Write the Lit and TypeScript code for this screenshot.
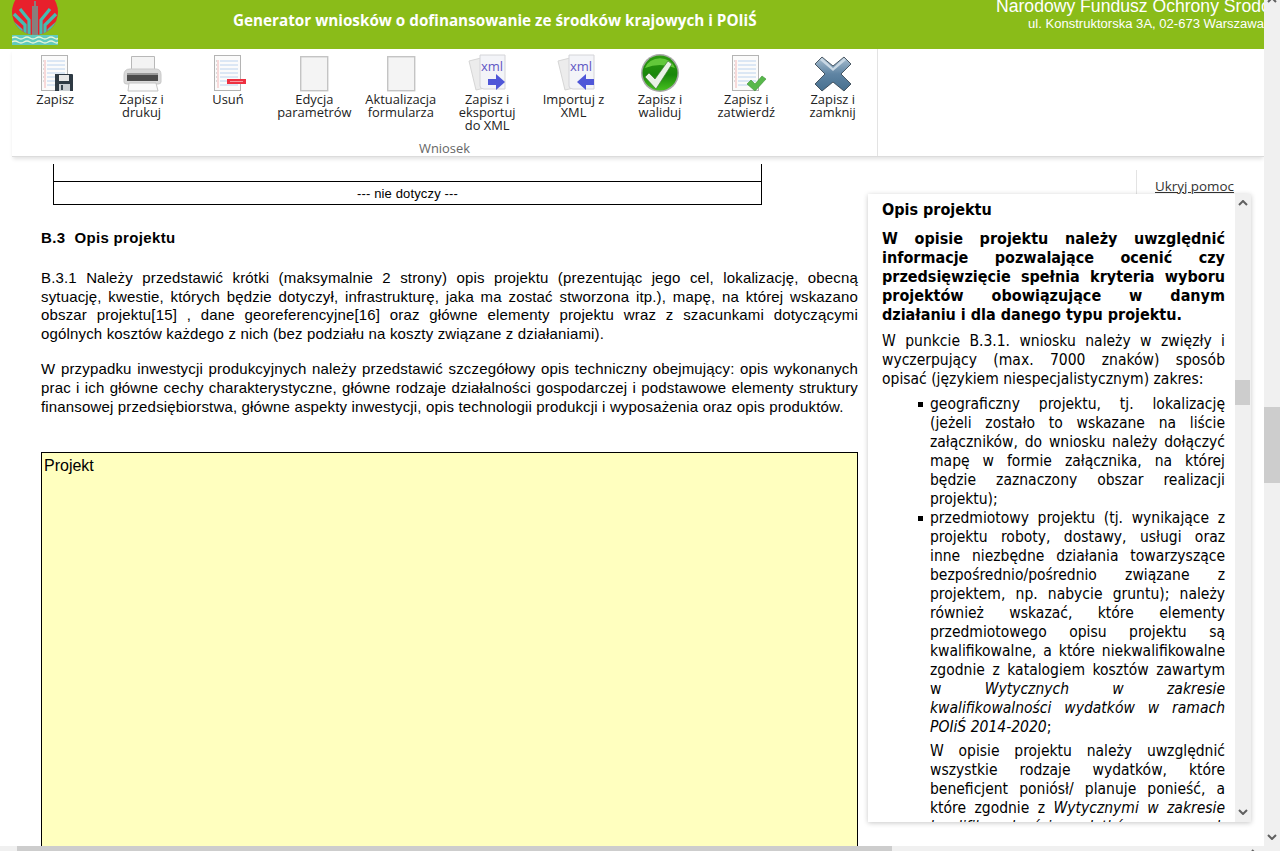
import { LitElement, html, css, svg } from 'lit';
import { customElement } from 'lit/decorators.js';

const pageLines = svg`
  <rect x="14.5" y="2.5" width="26" height="35" fill="#fbfbfb" stroke="#b4b4b4"/>
  <path d="M18 7v28" stroke="#f3b8b8" stroke-width="1"/>
  <path d="M20 8h18M20 12h18M20 16h18M20 20h18M20 24h18M20 28h18M20 32h18" stroke="#bcd3ee" stroke-width="1"/>
  <path d="M16 8h1M16 12h1M16 16h1M16 20h1M16 24h1M16 28h1" stroke="#bbb"/>`;

const xmlPage = svg`
  <path d="M10 8l12-3 8 29-13 3z" fill="#ececec" stroke="#d6d6d6"/>
  <path d="M21 2h25v34H25q-4 0-4-3z" fill="#f3f4f8" stroke="#d4d4d8"/>
  <text x="33" y="18" text-anchor="middle" class="xml">xml</text>`;

const icons = {
  save: svg`${pageLines}
    <path d="M28 21h17a1 1 0 0 1 1 1v16H28z" fill="#2e3a44"/>
    <rect x="32" y="22" width="10" height="6" fill="#e8e8e8"/>
    <rect x="32" y="31" width="11" height="7" fill="#c9ced2"/>
    <rect x="34" y="32" width="2" height="5" fill="#3a4650"/>`,
  print: svg`
    <path d="M17.500 18V3.500h23V18z" fill="#f3f3f3" stroke="#b8b8b8"/>
    <path d="M10 22q0-6 6-6h26q5 0 5 6v7q0 2-3 2H13q-3 0-3-2z" fill="#dadada" stroke="#c8c8c8"/>
    <rect x="13" y="22" width="31" height="6" fill="#4c4c4c"/>
    <rect x="13" y="20" width="31" height="2" fill="#9a9a9a"/>
    <path d="M15 30h27l2 8H14z" fill="#fafafa" stroke="#c4c4c4"/>`,
  remove: svg`${pageLines}
    <rect x="27" y="26" width="19" height="5" fill="#ee3040"/>
    <rect x="30" y="28" width="13" height="1" fill="#f79aa2"/>`,
  blank: svg`
    <rect x="14.700" y="3.700" width="27" height="34" fill="#f4f4f4" stroke="#c4c4c4" stroke-width="1.4"/>`,
  xmlOut: svg`${xmlPage}
    <path d="M29 26h8v-5l9 8-9 8v-5h-8z" fill="#4f57d8"/>`,
  xmlIn: svg`<g transform="translate(2 0)">${xmlPage}
    <path d="M46 26h-8v-5l-9 8 9 8v-5h8z" fill="#4f57d8"/></g>`,
  valid: svg`
    <defs>
      <linearGradient id="glass" x1="0" y1="0" x2="0" y2="1">
        <stop offset="0" stop-color="#2e9a12"/>
        <stop offset=".55" stop-color="#19870a"/>
        <stop offset="1" stop-color="#46c01e"/>
      </linearGradient>
    </defs>
    <circle cx="28" cy="20" r="19" fill="#a8a8a8"/>
    <circle cx="28" cy="20" r="17.500" fill="url(#glass)"/>
    <path d="M13 15a15.500 13 0 0 1 30 0q-15-6-30 0z" fill="#62c83a"/>
    <path d="M13 24l4-4 6 6 13-18 4 3-16 25z" fill="#eaf2e6" stroke="#3c7a30" stroke-width=".7"/>`,
  approve: svg`${pageLines}
    <path d="M29 31l4-4 4 4 7-8 4 3-11 12z" fill="#58b84a" stroke="#3d8f35" stroke-width=".6"/>`,
  close: svg`
    <defs>
      <linearGradient id="steel" x1="0" y1="0" x2="0" y2="1">
        <stop offset="0" stop-color="#a9bfd0"/>
        <stop offset=".5" stop-color="#5f84a3"/>
        <stop offset="1" stop-color="#47708f"/>
      </linearGradient>
    </defs>
    <path d="M17 4l11 9 11-9 7 7-10 10 10 10-7 7-11-9-11 9-7-7 10-10-10-10z" fill="url(#steel)" stroke="#2c3a46" stroke-width=".8"/>
    <path d="M17 5l11 10 11-10 2 2-13 11-13-11z" fill="#c9d8e4"/>`,
};

const tools = [
  { icon: icons.save, label: 'Zapisz' },
  { icon: icons.print, label: 'Zapisz i\ndrukuj' },
  { icon: icons.remove, label: 'Usuń' },
  { icon: icons.blank, label: 'Edycja\nparametrów' },
  { icon: icons.blank, label: 'Aktualizacja\nformularza' },
  { icon: icons.xmlOut, label: 'Zapisz i\neksportuj\ndo XML' },
  { icon: icons.xmlIn, label: 'Importuj z\nXML' },
  { icon: icons.valid, label: 'Zapisz i\nwaliduj' },
  { icon: icons.approve, label: 'Zapisz i\nzatwierdź' },
  { icon: icons.close, label: 'Zapisz i\nzamknij' },
];

@customElement('app-root')
export class AppRoot extends LitElement {
  static styles = css`
    :host {
      display: grid;
      grid-template-columns: 1fr 16px;
      grid-template-rows: 1fr 5px;
      width: 1280px;
      height: 851px;
      overflow: hidden;
      background: #fff;
      font-family: 'Liberation Sans', Arial, sans-serif;
      color: #000;
    }

    .page {
      min-width: 0;
      min-height: 0;
      display: flex;
      flex-direction: column;
      overflow: hidden;
    }

    .banner {
      flex: none;
      height: 49px;
      background: #8abc19;
      color: #fff;
      display: flex;
      overflow: hidden;
    }
    .logo {
      flex: none;
      width: 46px;
      height: 46px;
      margin-left: 12px;
    }
    .title {
      flex: none;
      width: 938px;
      padding: 11px 0 0 175px;
      box-sizing: border-box;
      font: 700 15.25px/18px 'Open Sans', sans-serif;
      white-space: nowrap;
    }
    .org {
      flex: none;
      width: 268px;
      white-space: nowrap;
      overflow: hidden;
      font-size: 17.6px;
      line-height: 18px;
      margin-top: -3px;
    }
    .org div + div {
      font-size: 13.05px;
      line-height: 17px;
      text-align: right;
    }

    .ribbon {
      flex: none;
      height: 108px;
      margin-left: 12px;
      box-sizing: border-box;
      border-bottom: 1px solid #dcdcdc;
      box-shadow: 0 3px 4px -1px rgba(0, 0, 0, 0.12);
      display: flex;
      position: relative;
    }
    .group {
      width: 865px;
      border-right: 1px solid #e3e3e3;
      display: flex;
      flex-direction: column;
    }
    .tools {
      flex: 1;
      display: flex;
      padding-top: 4px;
    }
    .tool {
      width: 86.4px;
      display: flex;
      flex-direction: column;
      align-items: center;
      font: 12.9px/13px 'Open Sans', sans-serif;
      color: #222;
      text-align: center;
    }
    .tool svg {
      width: 56px;
      height: 39px;
      flex: none;
      margin-bottom: 1px;
    }
    .tool span {
      white-space: pre-line;
    }
    .xml {
      font: 400 13px 'Open Sans', sans-serif;
      fill: #5f58c4;
    }
    .group-name {
      text-align: center;
      font: 12.9px/16px 'Open Sans', sans-serif;
      color: #666;
    }

    .content {
      flex: 1;
      min-height: 0;
      display: flex;
      overflow: hidden;
    }

    .doc {
      flex: none;
      width: 817px;
      margin-left: 41px;
      padding-top: 7px;
      font-size: 15px;
      letter-spacing: 0.16px;
      line-height: 18.6px;
    }
    .stub {
      width: 709px;
      margin-left: 12px;
      box-sizing: border-box;
      border: 1px solid #000;
      border-top: 0;
    }
    .stub div:first-child {
      height: 17px;
      border-bottom: 1px solid #000;
    }
    .stub div:last-child {
      height: 22px;
      font-size: 13px;
      letter-spacing: 0.14px;
      line-height: 24px;
      text-align: center;
    }
    h2 {
      margin: 24px 0 0;
      font-size: 15px;
      letter-spacing: 0.34px;
      line-height: 18px;
      font-weight: 700;
      white-space: pre;
    }
    .doc p {
      margin: 0;
      text-align: justify;
    }
    .doc h2 + p {
      margin-top: 22px;
    }
    .doc p + p {
      margin-top: 17px;
    }
    .answer {
      margin-top: 35.5px;
      height: 500px;
      box-sizing: border-box;
      border: 1px solid #000;
      background: #ffffbf;
      padding: 3px 2px;
      font-size: 16px;
      letter-spacing: 0;
      line-height: 20px;
    }

    .side {
      flex: none;
      width: 383px;
      margin-left: 10px;
      display: flex;
      flex-direction: column;
      min-height: 0;
    }
    .hide-bar {
      flex: none;
      height: 37px;
      display: flex;
      box-sizing: border-box;
      padding-top: 13px;
    }
    .hide-bar span {
      margin-left: 268px;
      border-left: 1px solid #e3e3e3;
    }
    .hide-bar a {
      margin: 4px 0 0 18px;
      font: 13.4px/24px 'Open Sans', sans-serif;
      color: #333;
      text-decoration: underline;
      white-space: nowrap;
    }
    .help {
      flex: none;
      height: 628px;
      display: flex;
      box-shadow: 0 1px 5px rgba(0, 0, 0, 0.22);
      background: #fff;
      overflow: hidden;
      position: relative;
    }
    .help-text {
      width: 367px;
      height: 628px;
      box-sizing: border-box;
      padding: 6px 10px 0 14px;
      overflow: hidden;
      font: 15.5px/19px 'DejaVu Sans', sans-serif;
      font-stretch: condensed;
      text-align: justify;
    }
    .help-text h3 {
      margin: 0 0 10px;
      font-size: 16px;
      line-height: 19px;
      font-weight: 700;
    }
    .help-text b {
      display: block;
      margin-bottom: 1px;
      font-size: 16px;
    }
    .help-text p {
      margin: 0 0 8px;
    }
    .help-text ul {
      margin: -2px 0 0;
      padding: 0 0 0 48px;
      list-style: none;
    }
    .help-text li {
      position: relative;
    }
    .help-text li::before {
      content: '';
      position: absolute;
      left: -12px;
      top: 7px;
      width: 5px;
      height: 5px;
      background: #000;
    }
    .help-text ul p {
      margin: 5px 0 0;
    }

    .vbar {
      background: #f0f0f0;
      position: relative;
    }
    .vbar svg {
      position: absolute;
      left: 50%;
      margin-left: -5px;
      width: 10px;
      height: 6px;
    }
    .vbar svg.up {
      top: 6px;
    }
    .vbar svg.down {
      bottom: 7px;
    }
    .thumb {
      position: absolute;
      left: 0;
      background: #cdcdcd;
    }
    .inner-bar {
      width: 16px;
      flex: none;
    }
    .inner-bar .thumb {
      top: 186px;
      height: 25px;
      width: 15px;
    }
    .page-bar {
      grid-row: 1 / 3;
      grid-column: 2;
    }
    .page-bar .thumb {
      top: 407px;
      height: 76px;
      width: 16px;
    }
    .page-bar svg.up {
      top: -3px;
    }
    .page-bar svg.down {
      bottom: 11px;
    }
    .hbar {
      grid-row: 2;
      grid-column: 1;
      background: #f0f0f0;
      position: relative;
      overflow: hidden;
    }
    .hbar div {
      position: absolute;
      left: 17px;
      top: 0;
      bottom: 0;
      width: 875px;
      background: #cdcdcd;
    }
    .hbar svg {
      position: absolute;
      right: 7px;
      top: 3px;
      width: 6px;
      height: 10px;
    }
  `;

  private chevron(cls: string) {
    const d = cls === 'up' ? 'M1 5l4-4 4 4' : 'M1 1l4 4 4-4';
    return html`<svg class=${cls} viewBox="0 0 10 6"><path d=${d} fill="none" stroke="#606060" stroke-width="2"/></svg>`;
  }

  private logo() {
    return html`<svg class="logo" viewBox="0 0 46 46">
      <defs><clipPath id="disc"><circle cx="23" cy="12" r="23"/></clipPath></defs>
      <circle cx="23" cy="12" r="23" fill="#e8202c"/>
      <g clip-path="url(#disc)" fill="none" stroke="#45bdb2" stroke-width="3.2">
        <path d="M17 35V20L8 9"/>
        <path d="M29 35V20L38 9"/>
        <path d="M13 35V25L2 14"/>
        <path d="M33 35V25L44 14"/>
        <path d="M9 35V30L0 22"/>
        <path d="M37 35V30L46 22"/>
      </g>
      <path d="M21 35V6M23 35V1M25 35V6" fill="none" stroke="#5fa8a0" stroke-width="1.400"/>
      <rect x="0" y="35" width="46" height="10" fill="#62cabd"/>
      <path d="M0 38q3-2 6 0t6 0 6 0 6 0 6 0 6 0 6 0 4 0M0 42q3-2 6 0t6 0 6 0 6 0 6 0 6 0 6 0 4 0" fill="none" stroke="#e6f5d8" stroke-width="1.500"/>
    </svg>`;
  }

  render() {
    return html`
      <div class="page">
        <header class="banner">
          ${this.logo()}
          <div class="title">Generator wniosków o dofinansowanie ze środków krajowych i POIiŚ</div>
          <div class="org">
            <div>Narodowy Fundusz Ochrony Środowiska i Gospodarki Wodnej</div>
            <div>ul. Konstruktorska 3A, 02-673 Warszawa</div>
          </div>
        </header>

        <nav class="ribbon">
          <div class="group">
            <div class="tools">
              ${tools.map(
                (t) => html`<div class="tool">
                  <svg viewBox="0 0 56 39">${t.icon}</svg>
                  <span>${t.label}</span>
                </div>`,
              )}
            </div>
            <div class="group-name">Wniosek</div>
          </div>
        </nav>

        <div class="content">
          <main class="doc">
            <div class="stub">
              <div></div>
              <div>--- nie dotyczy ---</div>
            </div>
            <h2>B.3  Opis projektu</h2>
            <p>
              B.3.1 Należy przedstawić krótki (maksymalnie 2 strony) opis projektu (prezentując jego cel, lokalizację,
              obecną sytuację, kwestie, których będzie dotyczył, infrastrukturę, jaka ma zostać stworzona itp.), mapę, na
              której wskazano obszar projektu[15] , dane georeferencyjne[16] oraz główne elementy projektu wraz z
              szacunkami dotyczącymi ogólnych kosztów każdego z nich (bez podziału na koszty związane z działaniami).
            </p>
            <p>
              W przypadku inwestycji produkcyjnych należy przedstawić szczegółowy opis techniczny obejmujący: opis
              wykonanych prac i ich główne cechy charakterystyczne, główne rodzaje działalności gospodarczej i podstawowe
              elementy struktury finansowej przedsiębiorstwa, główne aspekty inwestycji, opis technologii produkcji i
              wyposażenia oraz opis produktów.
            </p>
            <div class="answer">Projekt</div>
          </main>

          <aside class="side">
            <div class="hide-bar"><span></span><a>Ukryj pomoc</a></div>
            <div class="help">
              <div class="help-text">
                <h3>Opis projektu</h3>
                <p>
                  <b>W opisie projektu należy uwzględnić informacje pozwalające ocenić czy przedsięwzięcie spełnia
                  kryteria wyboru projektów obowiązujące w danym działaniu i dla danego typu projektu.</b>
                </p>
                <p>
                  W punkcie B.3.1. wniosku należy w zwięzły i wyczerpujący (max. 7000 znaków) sposób opisać (językiem
                  niespecjalistycznym) zakres:
                </p>
                <ul>
                  <li>
                    geograficzny projektu, tj. lokalizację (jeżeli zostało to wskazane na liście załączników, do wniosku
                    należy dołączyć mapę w formie załącznika, na której będzie zaznaczony obszar realizacji projektu);
                  </li>
                  <li>
                    przedmiotowy projektu (tj. wynikające z projektu roboty, dostawy, usługi oraz inne&nbsp;niezbędne
                    działania towarzyszące bezpośrednio/pośrednio związane z projektem, np. nabycie gruntu); należy
                    również wskazać, które elementy przedmiotowego opisu projektu są kwalifikowalne, a które
                    niekwalifikowalne zgodnie z katalogiem kosztów zawartym w
                    <i>Wytycznych w zakresie kwalifikowalności wydatków w ramach POIiŚ 2014-2020</i>;
                    <p>
                      W opisie projektu należy uwzględnić wszystkie rodzaje wydatków, które beneficjent poniósł/ planuje
                      ponieść, a które zgodnie z <i>Wytycznymi w zakresie kwalifikowalności wydatków w ramach</i> POIiŚ
                      2014-2020 są niekwalifikowalne.
                    </p>
                  </li>
                </ul>
              </div>
              <div class="vbar inner-bar">
                ${this.chevron('up')}
                <div class="thumb"></div>
                ${this.chevron('down')}
              </div>
            </div>
          </aside>
        </div>
      </div>

      <div class="vbar page-bar">
        ${this.chevron('up')}
        <div class="thumb"></div>
        ${this.chevron('down')}
      </div>
      <div class="hbar">
        <div></div>
        <svg viewBox="0 0 6 10"><path d="M1 1l4 4-4 4" fill="none" stroke="#606060" stroke-width="2"/></svg>
      </div>
    `;
  }
}
